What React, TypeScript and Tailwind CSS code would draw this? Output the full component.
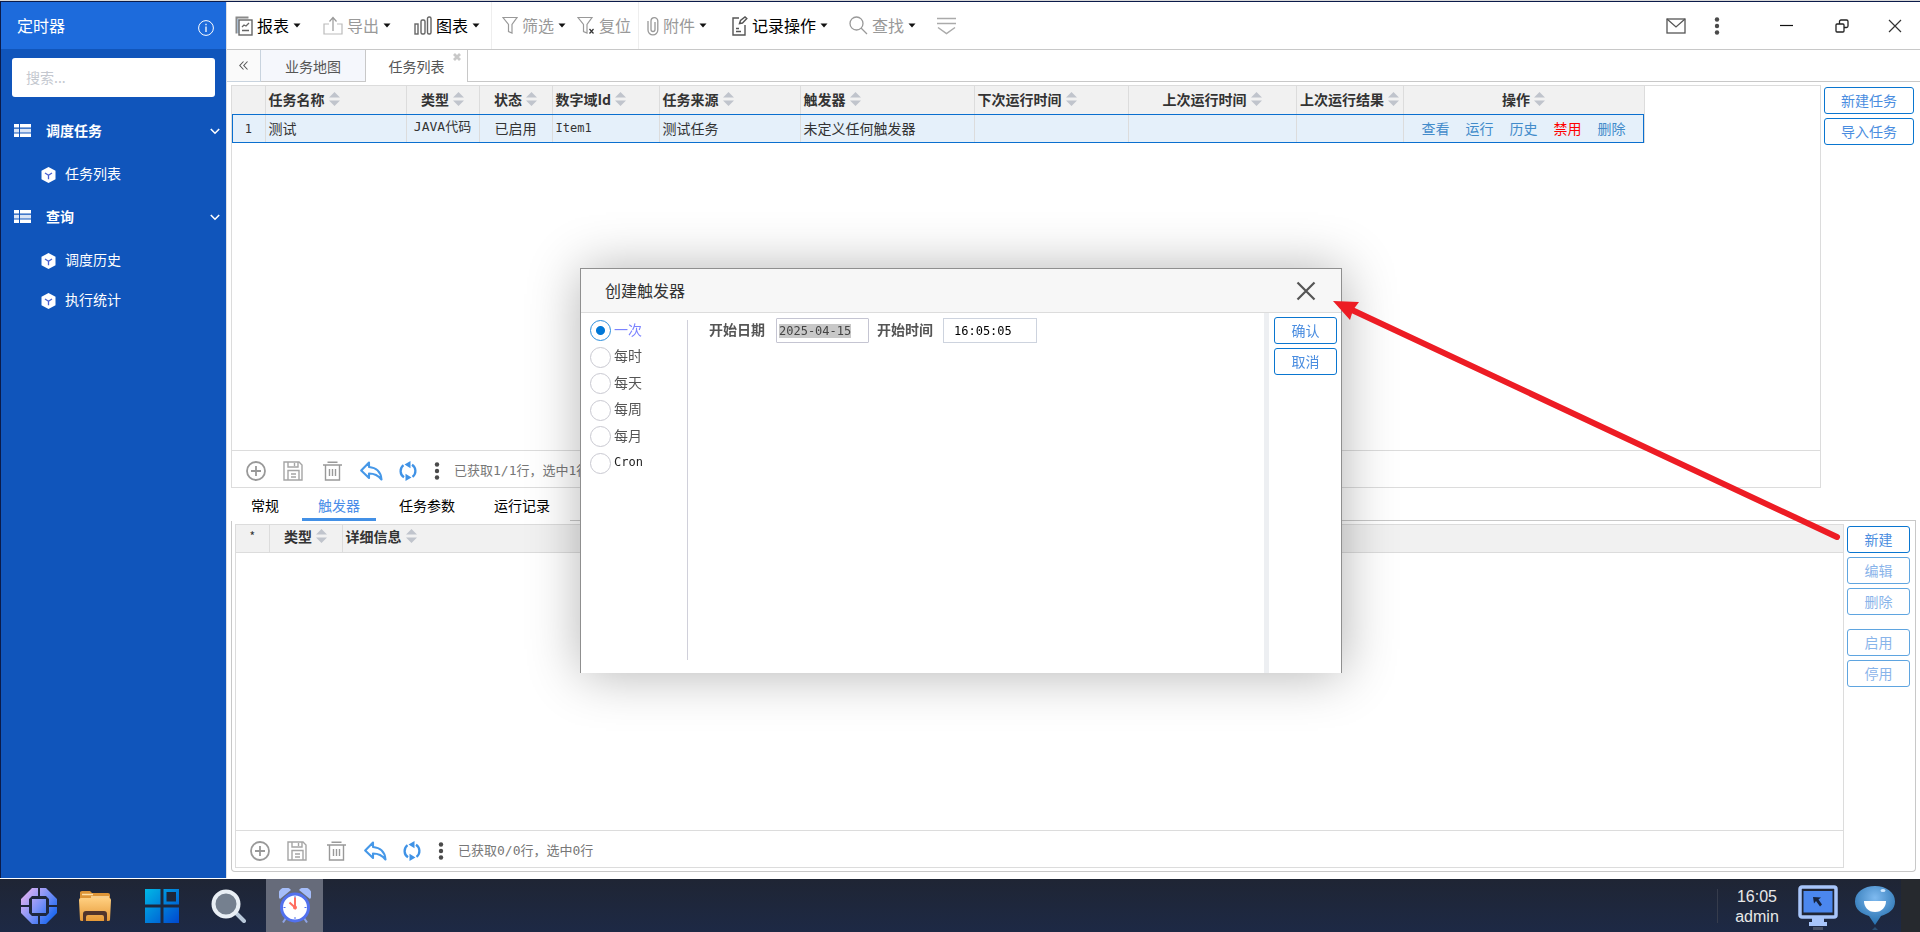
import { useEffect, useRef, useState } from "react";
import type { ReactNode } from "react";

const COLUMNS = [
  { label: "任务名称", width: "w-[141px]", align: "justify-start" },
  { label: "类型", width: "w-[73px]", align: "justify-center" },
  { label: "状态", width: "w-[73px]", align: "justify-center" },
  { label: "数字域Id", width: "w-[107px]", align: "justify-start" },
  { label: "任务来源", width: "w-[141px]", align: "justify-start" },
  { label: "触发器", width: "w-[174px]", align: "justify-start" },
  { label: "下次运行时间", width: "w-[154px]", align: "justify-start" },
  { label: "上次运行时间", width: "w-[168px]", align: "justify-center" },
  { label: "上次运行结果", width: "w-[107px]", align: "justify-center" },
  { label: "操作", width: "w-[241px]", align: "justify-center" },
];

const MENU = [
  { title: "调度任务", items: ["任务列表"] },
  { title: "查询", items: ["调度历史", "执行统计"] },
];

const CYCLES = ["一次", "每时", "每天", "每周", "每月", "Cron"];

/* ---------- icons ---------- */

function Caret() {
  return (
    <svg width="8" height="5" viewBox="0 0 8 5" className="shrink-0">
      <path d="M.5.5h7L4 4.5z" fill="#111" />
    </svg>
  );
}

function SortIcon() {
  return (
    <svg width="11" height="14" viewBox="0 0 11 14" className="shrink-0" fill="#c0c4cc">
      <path d="M0 5.5 5.5 0 11 5.5zM0 8.5h11L5.5 14z" />
    </svg>
  );
}

function ReportIcon() {
  return (
    <svg width="18" height="20" viewBox="0 0 18 20" fill="none" stroke="#666">
      <path d="M1.5 17.5v-16h12" stroke="#8a8a8a" strokeWidth="2" />
      <path d="M3 3v14" stroke="#8fb4dc" />
      <rect x="4" y="4" width="13" height="15" strokeWidth="1.4" />
      <path d="m7 11 2-2 2 1 3-3M7 14.5h7" strokeWidth="1.3" />
    </svg>
  );
}

function ExportIcon() {
  return (
    <svg width="20" height="20" viewBox="0 0 20 20" fill="none" stroke="#999" strokeWidth="1.2">
      <path d="M6 8H1v10h18V8h-5" stroke="#bbb" />
      <path d="M10 15V2M6.500 5.500 10 1.500l3.500 4" />
    </svg>
  );
}

function ChartIcon() {
  return (
    <svg width="18" height="19" viewBox="0 0 18 19" fill="none" stroke="#666" strokeWidth="1.4">
      <rect x="1" y="8" width="3" height="10" />
      <rect x="7" y="4" width="4" height="14" rx="1.500" />
      <rect x="13.500" y="1" width="3.500" height="17" rx="1.500" />
    </svg>
  );
}

function FilterIcon() {
  return (
    <svg width="16" height="19" viewBox="0 0 16 19" fill="none" stroke="#999" strokeWidth="1.2">
      <path d="M1 1.500h14L10 8.500V17l-3.500-1.500v-7z" />
    </svg>
  );
}

function FilterResetIcon() {
  return (
    <svg width="18" height="19" viewBox="0 0 18 19" fill="none" stroke="#999" strokeWidth="1.2">
      <path d="M1 1.500h14L10 8.500V17l-3.500-1.500v-7z" />
      <path d="m12.500 13 4 4.500m0-4.500-4 4.500" stroke="#333" />
    </svg>
  );
}

function ClipIcon() {
  return (
    <svg width="12" height="20" viewBox="0 0 12 20" fill="none" stroke="#999" strokeWidth="1.300">
      <path d="M1 5v9a4.800 4.800 0 0 0 9.800 0V5a3.400 3.400 0 0 0-6.800 0v8.500a2 2 0 0 0 4 0V6" />
    </svg>
  );
}

function RecordIcon() {
  return (
    <svg width="16" height="20" viewBox="0 0 16 20" fill="none" stroke="#555" strokeWidth="1.400">
      <path d="M7 2H1v17h12V9" />
      <path d="m7.500 7.500 1-3L13 1l1.800 1.500-4.300 4.500zM4 12.500h3M4 15.500h5" />
    </svg>
  );
}

function SearchIcon() {
  return (
    <svg width="19" height="19" viewBox="0 0 19 19" fill="none" stroke="#999" strokeWidth="1.300">
      <circle cx="7.500" cy="7.500" r="6.500" />
      <path d="m12 12 6 6" />
    </svg>
  );
}

function PlusCircleIcon() {
  return (
    <svg width="20" height="20" viewBox="0 0 20 20" fill="none" stroke="#999" strokeWidth="1.800">
      <circle cx="10" cy="10" r="9" />
      <path d="M10 5v10M5 10h10" />
    </svg>
  );
}

function SaveIcon() {
  return (
    <svg width="20" height="20" viewBox="0 0 20 20" fill="none" stroke="#a5a5a5" strokeWidth="1.400">
      <path d="M1 1h15l3 3v15H1z" />
      <path d="M5 1v5h10V1M11.500 2v3M5 19V9.500h11V19M8 13h5M8 16h5" />
    </svg>
  );
}

function TrashIcon() {
  return (
    <svg width="19" height="20" viewBox="0 0 19 20" fill="none" stroke="#999" strokeWidth="1.400">
      <path d="M0 4h19M4.500 1.200h10M2.500 4v15h14V4M6.500 8v7M9.500 8v7M12.500 8v7" />
    </svg>
  );
}

function UndoIcon() {
  return (
    <svg width="23" height="20" viewBox="0 0 23 20" fill="none" stroke="#4698e8" strokeWidth="2.100">
      <path d="M9 1.500 1.200 9.500 9 17v-4.500c5 0 9 1.500 12.500 6C21 11 16 6.500 9 6z" strokeLinejoin="round" />
    </svg>
  );
}

function RefreshIcon() {
  return (
    <svg width="18" height="20" viewBox="0 0 18 20" fill="none" stroke="#3f92e6" strokeWidth="2.300">
      <path d="M5 16.300A7.400 7.400 0 0 1 4.500 4.200M13 3.700a7.400 7.400 0 0 1 .5 12.100" />
      <path d="m11.500 0-6 3.500 6 3.800zM6.500 12.700l6 3.800-6 3.500z" fill="#3f92e6" stroke="none" />
    </svg>
  );
}

function DotsIcon() {
  return (
    <svg width="6" height="18" viewBox="0 0 6 18" fill="#4a4a4a">
      <circle cx="3" cy="2.500" r="2.200" />
      <circle cx="3" cy="9" r="2.200" />
      <circle cx="3" cy="15.500" r="2.200" />
    </svg>
  );
}

function ListIcon() {
  return (
    <svg width="17" height="14" viewBox="0 0 17 14" fill="#fff">
      <path d="M0 0h5v3.500H0zM6 0h11v3.500H6zM0 9.500h5V13H0zM6 9.500h11V13H6z" />
      <path d="M0 4.700h5v3.800H0zM6 4.700h11v3.800H6z" opacity=".85" />
    </svg>
  );
}

function CubeIcon() {
  return (
    <svg width="15" height="16" viewBox="0 0 15 16" className="mt-0.5">
      <path d="m7.500 0 7 3.800v8.400l-7 3.800-7-3.800V3.800z" fill="#fff" />
      <path d="m4 6 3.500 2.300L11 6M7.500 8.300v4" fill="none" stroke="#4a5fd0" strokeWidth="1.300" />
    </svg>
  );
}

/* ---------- small parts ---------- */

type ToolProps = { icon: ReactNode; label: string; disabled?: boolean; caret?: boolean; className?: string };

function Tool({ icon, label, disabled, caret = true, className = "" }: ToolProps) {
  return (
    <button type="button" className={`flex items-center gap-1 text-base leading-6 ${disabled ? "text-[#999]" : "text-black"} ${className}`}>
      {icon}
      <span className="pb-0.5">{label}</span>
      {caret && <Caret />}
    </button>
  );
}

function SideButton({ label, disabled = false, className = "" }: { label: string; disabled?: boolean; className?: string }) {
  return (
    <button
      type="button"
      disabled={disabled}
      className={`h-[27px] w-full rounded-[3px] border border-[#0a76d0] bg-white pb-0.5 text-sm leading-5 text-[#4a8de0] disabled:opacity-65 ${className}`}
    >
      {label}
    </button>
  );
}

function GridFooter({ text }: { text: string }) {
  return (
    <div className="flex h-[37px] shrink-0 items-center border-t border-[#dcdcdc] pl-3.5 pt-1">
      <button type="button" aria-label="新增"><PlusCircleIcon /></button>
      <button type="button" aria-label="保存" className="ml-[17px]"><SaveIcon /></button>
      <button type="button" aria-label="删除" className="ml-5"><TrashIcon /></button>
      <button type="button" aria-label="撤销" className="ml-[18px]"><UndoIcon /></button>
      <button type="button" aria-label="刷新" className="ml-4"><RefreshIcon /></button>
      <button type="button" aria-label="更多" className="ml-[17px]"><DotsIcon /></button>
      <span className="ml-3.5 font-['DejaVu_Sans_Mono','Noto_Sans_CJK_SC',monospace] text-[13px] leading-5 text-[#777]">{text}</span>
    </div>
  );
}

/* ---------- page parts ---------- */

function Sidebar() {
  return (
    <aside className="w-[225px] shrink-0 bg-[#1055bb] text-white">
      <div className="flex h-[47px] items-center justify-between bg-[#1d6bdc] pl-4 pr-3">
        <h1 className="pb-0.5 text-base leading-6">定时器</h1>
        <svg width="16" height="16" viewBox="0 0 16 16" fill="none" stroke="#fff" className="mt-1">
          <circle cx="8" cy="8" r="7.400" />
          <path d="M8 6.500V12M8 3.800v1.400" strokeWidth="1.300" />
        </svg>
      </div>
      <div className="pl-[11px] pr-[11px] pt-[9px]">
        <input
          type="text"
          aria-label="搜索"
          placeholder="搜索..."
          className="block h-[39px] w-full rounded-[3px] bg-white px-3.5 pb-0.5 text-sm text-gray-700 outline-none placeholder:text-[#c4c8cf]"
        />
      </div>
      <nav className="mt-3">
        {MENU.map((group) => (
          <div key={group.title} className="mb-px">
            <button type="button" className="flex h-11 w-full items-center pl-[13px] pr-1.5 text-sm font-bold">
              <ListIcon />
              <span className="ml-[15px] flex-1 pb-0.5 text-left">{group.title}</span>
              <svg width="10" height="7" viewBox="0 0 10 7" fill="none" stroke="#fff" strokeWidth="1.600">
                <path d="m.8 1 4.200 4.200L9.200 1" />
              </svg>
            </button>
            <ul className="pt-px">
              {group.items.map((item) => (
                <li key={item}>
                  <a href="#" className="flex h-10 items-center gap-[9px] pl-10 text-sm">
                    <CubeIcon />
                    <span className="pb-0.5">{item}</span>
                  </a>
                </li>
              ))}
            </ul>
          </div>
        ))}
      </nav>
    </aside>
  );
}

function Toolbar() {
  return (
    <header className="flex h-12 shrink-0 items-center border-b border-[#c8c8c8] pl-2">
      <Tool icon={<ReportIcon />} label="报表" />
      <Tool icon={<ExportIcon />} label="导出" disabled className="ml-[22px]" />
      <Tool icon={<ChartIcon />} label="图表" className="ml-[23px]" />
      <div className="ml-[11px] h-full w-px bg-[#eee]" />
      <Tool icon={<FilterIcon />} label="筛选" disabled className="ml-2.5" />
      <Tool icon={<FilterResetIcon />} label="复位" disabled caret={false} className="ml-[11px]" />
      <div className="ml-[7px] h-full w-px bg-[#eee]" />
      <Tool icon={<ClipIcon />} label="附件" disabled className="ml-2" />
      <Tool icon={<RecordIcon />} label="记录操作" className="ml-[25px]" />
      <Tool icon={<SearchIcon />} label="查找" disabled className="ml-[21px]" />
      <button type="button" aria-label="展开" className="ml-[21px]">
        <svg width="19" height="18" viewBox="0 0 19 18" fill="none" stroke="#aaa" strokeWidth="1.500">
          <path d="M0 1.500h19M0 6.500h19M1 10.500l8.500 6 8.500-6" />
        </svg>
      </button>
      <div className="ml-auto flex items-center pr-[18px]">
        <button type="button" aria-label="消息">
          <svg width="20" height="16" viewBox="0 0 20 16" fill="none" stroke="#555" strokeWidth="1.300">
            <rect x="1" y="1" width="18" height="14" />
            <path d="m1 1 9 8 9-8" />
          </svg>
        </button>
        <button type="button" aria-label="更多" className="ml-7"><DotsIcon /></button>
        <button type="button" aria-label="最小化" className="ml-[60px]">
          <svg width="13" height="13" viewBox="0 0 13 13"><path d="M0 6.500h13" stroke="#111" strokeWidth="1.200" /></svg>
        </button>
        <button type="button" aria-label="还原" className="ml-[42px]">
          <svg width="14" height="14" viewBox="0 0 14 14" fill="none" stroke="#222" strokeWidth="1.300">
            <rect x="1" y="5" width="8" height="8" rx="1" />
            <path d="M4.500 5V2.500A1.500 1.500 0 0 1 6 1h5.500A1.500 1.500 0 0 1 13 2.500V7a1.500 1.500 0 0 1-1.500 1.500H9" />
          </svg>
        </button>
        <button type="button" aria-label="关闭" className="ml-[39px]">
          <svg width="14" height="14" viewBox="0 0 14 14"><path d="m1 1 12 12M13 1 1 13" stroke="#333" strokeWidth="1.200" /></svg>
        </button>
      </div>
    </header>
  );
}

function PageTabs() {
  return (
    <div className="flex h-8 shrink-0 text-sm text-[#555]">
      <button type="button" aria-label="收起" className="flex w-[34px] items-center justify-center border-b border-r border-[#c8d3de] bg-[#fafafa]">
        <svg width="9" height="9" viewBox="0 0 9 9" fill="none" stroke="#555" strokeWidth="1.100">
          <path d="M4.500.5.800 4.500l3.700 4M8.500.5 4.800 4.500l3.700 4" />
        </svg>
      </button>
      <button type="button" className="w-[105px] border-b border-r border-[#c8c8c8] bg-[#f5f7fc]">业务地图</button>
      <button type="button" className="relative w-[102px] border-r border-[#c8c8c8] bg-white">
        任务列表
        <svg width="8" height="8" viewBox="0 0 8 8" className="absolute right-1.5 top-[3px]">
          <path d="m1 1 6 6M7 1 1 7" stroke="#c8c8c8" strokeWidth="2.800" />
        </svg>
      </button>
      <div className="flex-1 border-b border-[#c8c8c8]" />
    </div>
  );
}

function TaskGrid() {
  const cell = "border-r border-[#dcdcdc] px-[3px] pb-0.5";
  return (
    <section className="flex h-[403px] shrink-0 gap-[3px]">
      <div className="flex min-w-0 flex-1 flex-col border border-[#dcdcdc]">
        <div className="flex-1">
          <table className="w-[1412px] table-fixed border-collapse text-left text-sm text-[#333]">
            <thead>
              <tr className="h-7 bg-[#f1f1f1]">
                <th className="w-[33px] border-r border-[#dcdcdc]" />
                {COLUMNS.map((col) => (
                  <th key={col.label} className={`border-r border-[#dcdcdc] px-[3px] pb-[3px] ${col.width} font-bold`}>
                    <div className={`flex items-center gap-1 whitespace-nowrap ${col.align}`}>
                      {col.label}
                      <SortIcon />
                    </div>
                  </th>
                ))}
              </tr>
            </thead>
            <tbody>
              <tr className="h-[29px] bg-[#e5f0fa] outline outline-1 -outline-offset-1 outline-[#0a6fcf]">
                <td className="border-r border-[#dcdcdc] text-center font-['DejaVu_Sans_Mono',monospace] text-xs">1</td>
                <td className={cell}>测试</td>
                <td className={`${cell} text-center font-['DejaVu_Sans_Mono','Noto_Sans_CJK_SC',monospace] text-[13px]`}>JAVA代码</td>
                <td className={`${cell} text-center`}>已启用</td>
                <td className={`${cell} font-['DejaVu_Sans_Mono',monospace] text-xs`}>Item1</td>
                <td className={cell}>测试任务</td>
                <td className={cell}>未定义任何触发器</td>
                <td className={cell} />
                <td className={cell} />
                <td className={cell} />
                <td className={cell}>
                  <div className="flex justify-center gap-4 text-[#428bca]">
                    <a href="#">查看</a>
                    <a href="#">运行</a>
                    <a href="#">历史</a>
                    <a href="#" className="text-[#f00]">禁用</a>
                    <a href="#">删除</a>
                  </div>
                </td>
              </tr>
            </tbody>
          </table>
        </div>
        <GridFooter text="已获取1/1行，选中1行" />
      </div>
      <div className="w-24 space-y-1 pr-1.5 pt-0.5">
        <SideButton label="新建任务" />
        <SideButton label="导入任务" />
      </div>
    </section>
  );
}

function TriggerPanel() {
  const tab = "h-full px-4 leading-6 text-black";
  return (
    <section className="mt-px flex min-h-0 flex-1 flex-col pr-1">
      <div className="flex h-8 shrink-0 text-sm">
        <div role="tablist" className="flex gap-[7px] px-1">
          <button type="button" role="tab" className={tab}>常规</button>
          <button type="button" role="tab" aria-selected="true" className="h-full border-b-3 border-[#4390e6] px-4 pt-[3px] leading-6 text-[#4a8de8]">触发器</button>
          <button type="button" role="tab" className={tab}>任务参数</button>
          <button type="button" role="tab" className={tab}>运行记录</button>
        </div>
        <div className="flex-1 border-b border-[#c8c8c8]" />
      </div>
      <div className="flex min-h-0 flex-1 gap-[3px] rounded-b border border-t-0 border-[#c8c8c8] py-[3px] pl-[3px] pr-[5px]">
        <div className="flex min-w-0 flex-1 flex-col border border-[#dcdcdc]">
          <div className="flex-1">
            <table className="w-full table-fixed border-collapse text-left text-sm text-[#333]">
              <thead>
                <tr className="h-[27px] border-b border-[#dcdcdc] bg-[#f1f1f1]">
                  <th className="w-[33px] border-r border-[#dcdcdc] pb-1 text-center text-xs font-normal">*</th>
                  <th className="w-[73px] border-r border-[#dcdcdc] px-[3px] pb-1 font-bold">
                    <div className="flex items-center justify-center gap-1">类型<SortIcon /></div>
                  </th>
                  <th className="px-[3px] pb-1 font-bold">
                    <div className="flex items-center gap-1">详细信息<SortIcon /></div>
                  </th>
                </tr>
              </thead>
            </table>
          </div>
          <GridFooter text="已获取0/0行，选中0行" />
        </div>
        <div className="w-[63px] space-y-1 pt-0.5">
          <SideButton label="新建" />
          <SideButton label="编辑" disabled />
          <SideButton label="删除" disabled />
          <SideButton label="启用" disabled className="mt-[10px]" />
          <SideButton label="停用" disabled />
        </div>
      </div>
    </section>
  );
}

function TriggerDialog() {
  const [cycle, setCycle] = useState("一次");
  const dateRef = useRef<HTMLInputElement>(null);

  useEffect(() => {
    dateRef.current?.focus();
    dateRef.current?.select();
  }, []);

  return (
    <div className="fixed inset-0 flex items-center justify-center pl-0.5 pt-[9px]">
      <div role="dialog" aria-label="创建触发器" className="flex h-[405px] w-[762px] flex-col border border-b-0 border-[#8f8f8f] bg-white shadow-[1px_1px_50px_rgba(0,0,0,0.3)]">
        <div className="flex h-11 shrink-0 items-center justify-between border-b border-[#dcdcdc] bg-[#f7f7f7] pl-6 pr-[25px]">
          <h2 className="pb-0.5 text-base leading-6 text-[#333]">创建触发器</h2>
          <button type="button" aria-label="关闭">
            <svg width="20" height="20" viewBox="0 0 20 20"><path d="m1.500 1.500 17 17M18.500 1.500l-17 17" stroke="#555" strokeWidth="2.200" /></svg>
          </button>
        </div>
        <div className="flex min-h-0 flex-1">
          <div className="mb-[13px] mt-[7px] flex w-[107px] shrink-0 border-r border-[#d0d0da] pl-[9px]">
            <div className="flex h-[154px] flex-col justify-between">
              {CYCLES.map((item) => (
                <label key={item} className="flex h-[21px] items-center gap-[3px] text-sm leading-5">
                  <input
                    type="radio"
                    name="cycle"
                    checked={cycle === item}
                    onChange={() => setCycle(item)}
                    className="peer size-[21px] appearance-none rounded-full border border-[#c8c8d0] bg-white checked:border-[#2a8ddb] checked:bg-[radial-gradient(circle,#0078d7_4px,#fff_5px)]"
                  />
                  {item === "Cron" ? (
                    <span className="pb-0.5 font-['DejaVu_Sans_Mono',monospace] text-xs text-[#222]">{item}</span>
                  ) : (
                    <span className="pb-1 text-[#555] peer-checked:text-[#7b83ff]">{item}</span>
                  )}
                </label>
              ))}
            </div>
          </div>
          <div className="flex flex-1 items-start pl-[21px] pt-[5px] text-sm">
            <label htmlFor="start-date" className="font-bold leading-[22px] text-[#555]">开始日期</label>
            <input
              id="start-date"
              ref={dateRef}
              type="text"
              defaultValue="2025-04-15"
              className="ml-[11px] h-[25px] w-[93px] rounded-[1px] border border-[#c5c5d2] px-0.5 font-['DejaVu_Sans_Mono',monospace] text-xs text-[#444] outline-none selection:bg-[#c8c8c8] selection:text-[#444]"
            />
            <label htmlFor="start-time" className="ml-2 font-bold leading-[22px] text-[#555]">开始时间</label>
            <input
              id="start-time"
              type="text"
              defaultValue="16:05:05"
              className="ml-[10px] h-[25px] w-[94px] border border-[#cdd3de] px-2.5 font-['DejaVu_Sans_Mono',monospace] text-xs text-black outline-none"
            />
          </div>
          <div className="w-[77px] space-y-1 border-l-[5px] border-[#edeff2] pl-[5px] pr-1 pt-1">
            <SideButton label="确认" />
            <SideButton label="取消" />
          </div>
        </div>
      </div>
    </div>
  );
}

function Taskbar() {
  return (
    <footer className="flex h-[53px] shrink-0 items-center bg-linear-to-b from-[#1f2534] to-[#1d2945]">
      <button type="button" aria-label="开始" className="ml-[21px]">
        <svg width="36" height="36" viewBox="0 0 36 36">
          <defs>
            <linearGradient id="startFill" gradientUnits="userSpaceOnUse" x1="2" y1="6" x2="34" y2="30">
              <stop offset="0" stopColor="#dcb0f2" />
              <stop offset=".5" stopColor="#7c92f8" />
              <stop offset="1" stopColor="#1565ee" />
            </linearGradient>
          </defs>
          <path
            d="M11 0h6v8h-6l-3 3v6H0v-6zM19 0h6l11 11v6h-8v-6l-3-3h-6zM0 19h8v6l3 3h6v8h-6L0 25zM28 19h8v6L25 36h-6v-8h6l3-3zM11 11h14v14H11z"
            fill="url(#startFill)"
          />
        </svg>
      </button>
      <button type="button" aria-label="文件" className="ml-[21px]">
        <svg width="34" height="32" viewBox="0 0 34 32">
          <defs>
            <linearGradient id="folderFill" x1="0" y1="0" x2="0" y2="1">
              <stop offset="0" stopColor="#ffcf80" />
              <stop offset="1" stopColor="#e69a38" />
            </linearGradient>
          </defs>
          <path d="M2 2.500Q2 1 4 1h8l2 2h16q2 0 2 2v6H2z" fill="#dd9436" />
          <path d="M4 4.500h11M13 7h18" stroke="#ffe0a6" strokeWidth="1.500" />
          <path d="M1 10q0-2 2-2h28q2 0 2 2l-1 20q0 1-2 1H4q-2 0-2-1z" fill="url(#folderFill)" />
          <path d="M5 31v-7q0-3 3-3h18q3 0 3 3v7h-3v-4q0-2-2-2H10q-2 0-2 2v4z" fill="#50342c" />
        </svg>
      </button>
      <button type="button" aria-label="应用" className="ml-[33px]">
        <svg width="34" height="34" viewBox="0 0 34 34">
          <defs>
            <linearGradient id="tileFill" gradientUnits="userSpaceOnUse" x1="0" y1="0" x2="34" y2="34">
              <stop offset="0" stopColor="#00b8e6" />
              <stop offset="1" stopColor="#0048d0" />
            </linearGradient>
          </defs>
          <path d="M0 0h15.500v15.500H0zM0 18.500h15.500V34H0zM18.500 18.500H34V34H18.500z" fill="url(#tileFill)" />
          <path d="M20 1.500h12.500V14H20z" fill="none" stroke="url(#tileFill)" strokeWidth="3" />
        </svg>
      </button>
      <button type="button" aria-label="查找" className="ml-8">
        <svg width="35" height="34" viewBox="0 0 35 34">
          <path d="m23 22 10 10" stroke="#b9c9da" strokeWidth="4" strokeLinecap="round" />
          <circle cx="15" cy="15" r="12.500" fill="#75808f" stroke="#e9eff5" strokeWidth="4" />
        </svg>
      </button>
      <button type="button" aria-label="定时器" className="ml-5 flex h-full w-[57px] items-center justify-center bg-[#666b7a]">
        <svg width="32" height="36" viewBox="0 0 32 36">
          <path d="M1 11A7 7 0 0 1 12 2zM31 11A7 7 0 0 0 20 2z" fill="#a5bdfa" />
          <path d="m7 30-3 4.500M25 30l3 4.500" stroke="#8fa5e8" strokeWidth="2" />
          <circle cx="16" cy="19.500" r="13.500" fill="#fff" stroke="#5271ee" strokeWidth="3" />
          <path d="M16 8v2M16 29v2M4.500 19.500h2M25.500 19.500h2" stroke="#5271ee" />
          <path d="M16 9.500v10l-5.500-5" fill="none" stroke="#ff6f61" strokeWidth="2" />
          <circle cx="16" cy="19.500" r="2" fill="#ff6f61" />
        </svg>
      </button>
      <div className="ml-auto h-[34px] w-px bg-[#363c4c]" />
      <div className="w-[78px] pt-0.5 text-center font-['Liberation_Sans',sans-serif] text-base leading-5 text-[#e8e8e8]">
        <div>16:05</div>
        <div>admin</div>
      </div>
      <svg width="40" height="45" viewBox="0 0 40 45" className="ml-[2px] mt-1">
        <rect x="2" y="2" width="36" height="30" rx="2" fill="#1f2534" stroke="#a8c5fa" strokeWidth="3.500" />
        <rect x="5.500" y="6" width="29" height="21.500" fill="#4b87ee" />
        <path d="M14 33h12v4h3v4H11v-4h3z" fill="#a8c5fa" />
        <path d="M15 42h10v3H15z" fill="#4a5266" />
        <path d="m15 12 8 .5-2.500 2 3.500 5-2 2-4-5.500-2 2.500z" fill="#17233c" />
      </svg>
      <svg width="40" height="45" viewBox="0 0 40 45" className="ml-[17px] mt-1">
        <defs>
          <radialGradient id="faceFill" cx=".5" cy=".3" r=".7">
            <stop offset="0" stopColor="#7fbaf0" />
            <stop offset="1" stopColor="#256fae" />
          </radialGradient>
        </defs>
        <path d="M20 1c11 0 20 6 20 15.500 0 8-6 12-14 14.500L20 40l-6-9C6 28.500 0 24.500 0 16.500 0 7 9 1 20 1z" fill="url(#faceFill)" />
        <path d="M9 16h22c0 6-4 11-11 11S9 22 9 16z" fill="#fff" />
        <ellipse cx="28" cy="5.500" rx="2.500" ry="1.500" fill="#cfe8ff" />
        <path d="m20 42-3 3h6z" fill="#2b4d70" />
      </svg>
      <div className="ml-1.5 h-full w-[19px] bg-[#26292e]" />
    </footer>
  );
}

export default function App() {
  return (
    <div className="flex h-screen flex-col bg-white font-['Noto_Sans_CJK_SC',sans-serif] text-sm">
      <div className="flex min-h-0 flex-1 border-b border-t border-b-white border-t-[#d8d8d8]">
        <div className="flex min-w-0 flex-1 border-l border-t border-[#0b1b4a]">
          <Sidebar />
          <main className="flex min-w-0 flex-1 flex-col border-l border-[#dcdfe4]">
            <Toolbar />
            <PageTabs />
            <div className="flex min-h-0 flex-1 flex-col pb-1.5 pl-1 pt-[3px]">
              <TaskGrid />
              <TriggerPanel />
            </div>
          </main>
        </div>
      </div>
      <Taskbar />
      <TriggerDialog />
      {/* pointer from the 新建 button to the dialog */}
      <svg className="pointer-events-none fixed inset-0 h-full w-full" fill="#ed1c24">
        <path d="M1352 310 1837 537" stroke="#ed1c24" strokeWidth="6" strokeLinecap="round" />
        <path d="m1333 301 26 1-6 8-3 10z" />
      </svg>
    </div>
  );
}
